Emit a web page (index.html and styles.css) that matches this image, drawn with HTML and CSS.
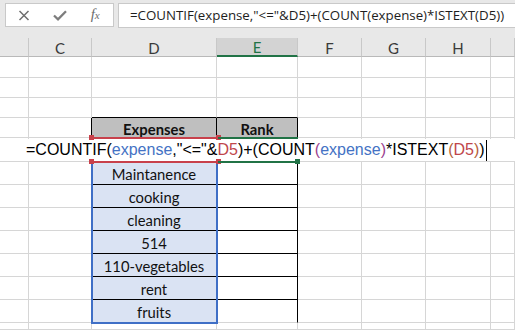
FILE: index.html
```html
<!DOCTYPE html>
<html>
<head>
<meta charset="utf-8">
<link rel="stylesheet" href="styles.css">
</head>
<body>
<div class="app">
  <div class="fbar">
    <div class="fbtns">
      <span class="btn"><svg width="12" height="11" viewBox="0 0 12 11"><path d="M1.5 1 L10.5 10 M10.5 1 L1.5 10" stroke="#6f6f6f" stroke-width="1.5" fill="none"/></svg></span>
      <span class="btn"><svg width="14" height="11" viewBox="0 0 14 11"><path d="M1 5.5 L5 9.3 L13 1.2" stroke="#7d7d7d" stroke-width="2.3" fill="none"/></svg></span>
      <span class="btn fx"><i>f</i><i class="x">x</i></span>
    </div>
    <div class="finput">=COUNTIF(expense,"&lt;="&amp;D5)+(COUNT(expense)*ISTEXT(D5))</div>
  </div>
  <div class="sheet">
    <div class="h"></div><div class="h">C</div><div class="h">D</div><div class="h sel">E</div><div class="h">F</div><div class="h">G</div><div class="h">H</div><div class="h"></div>

    <div class="c"></div><div class="c"></div><div class="c"></div><div class="c"></div><div class="c"></div><div class="c"></div><div class="c"></div><div class="c"></div>
    <div class="c"></div><div class="c"></div><div class="c"></div><div class="c"></div><div class="c"></div><div class="c"></div><div class="c"></div><div class="c"></div>
    <div class="c"></div><div class="c"></div><div class="c tb"></div><div class="c tb"></div><div class="c"></div><div class="c"></div><div class="c"></div><div class="c"></div>

    <div class="c"></div><div class="c tr"></div><div class="c th">Expenses</div><div class="c th">Rank</div><div class="c"></div><div class="c"></div><div class="c"></div><div class="c"></div>

    <div class="c"></div><div class="c"></div><div class="c"></div><div class="c"></div><div class="c"></div><div class="c"></div><div class="c"></div><div class="c"></div>

    <div class="c"></div><div class="c tr"></div><div class="c ex">Maintanence</div><div class="c rk"></div><div class="c"></div><div class="c"></div><div class="c"></div><div class="c"></div>
    <div class="c"></div><div class="c tr"></div><div class="c ex">cooking</div><div class="c rk"></div><div class="c"></div><div class="c"></div><div class="c"></div><div class="c"></div>
    <div class="c"></div><div class="c tr"></div><div class="c ex">cleaning</div><div class="c rk"></div><div class="c"></div><div class="c"></div><div class="c"></div><div class="c"></div>
    <div class="c"></div><div class="c tr"></div><div class="c ex">514</div><div class="c rk"></div><div class="c"></div><div class="c"></div><div class="c"></div><div class="c"></div>
    <div class="c"></div><div class="c tr"></div><div class="c ex">110-vegetables</div><div class="c rk"></div><div class="c"></div><div class="c"></div><div class="c"></div><div class="c"></div>
    <div class="c"></div><div class="c tr"></div><div class="c ex">rent</div><div class="c rk"></div><div class="c"></div><div class="c"></div><div class="c"></div><div class="c"></div>
    <div class="c"></div><div class="c tr"></div><div class="c ex">fruits</div><div class="c rk last"></div><div class="c"></div><div class="c"></div><div class="c"></div><div class="c"></div>

    <div class="c"></div><div class="c"></div><div class="c"></div><div class="c"></div><div class="c"></div><div class="c"></div><div class="c"></div><div class="c"></div>

    <div class="hl blue"></div>
    <div class="edit">=COUNTIF(<span class="rb">expense</span>,"&lt;="&amp;<span class="rr">D5</span>)+(COUNT<span class="p1">(</span><span class="rb">expense</span><span class="p1">)</span>*ISTEXT<span class="p2">(</span><span class="rr">D5</span><span class="p2">)</span>)<span class="caret"></span></div>
    <div class="hl red"><span class="sq tl"></span><span class="sq trr"></span><span class="sq bl"></span><span class="sq br"></span></div>
    <div class="hl green"><span class="sq gbr"></span></div>
  </div>
</div>
</body>
</html>
```
FILE: styles.css
```css
html, body {
  margin: 0;
  padding: 0;
  background: #ffffff;
}
.app {
  width: 515px;
  height: 330px;
  overflow: hidden;
  font-family: Lato, "Liberation Sans", sans-serif;
}
.fbar {
  height: 38px;
  box-sizing: border-box;
  padding: 3px 0 0 5px;
  background: #e8e8e8;
  display: flex;
  align-items: flex-start;
  gap: 4px;
}
.fbtns {
  width: 109px;
  height: 24px;
  box-sizing: border-box;
  border: 1px solid #c9c9c9;
  background: #ffffff;
  display: flex;
  align-items: center;
  padding-left: 0;
}
.btn {
  width: 36px;
  height: 22px;
  display: flex;
  align-items: center;
  justify-content: center;
}
.fx {
  font-family: "Liberation Serif", serif;
  font-size: 15px;
  color: #6c6c6c;
  padding-bottom: 1px;
}
.fx .x {
  font-size: 11px;
  margin-left: 0;
}
.finput {
  flex: 1;
  height: 25px;
  box-sizing: border-box;
  border: 1px solid #c9c9c9;
  border-right: none;
  background: #ffffff;
  font-family: "Open Sans", sans-serif;
  font-size: 13.3px;
  line-height: 22px;
  padding-left: 11px;
  color: #1e1e1e;
  white-space: nowrap;
}
.sheet {
  position: relative;
  display: grid;
  grid-template-columns: 29px 63px 125px 81px 64px 64px 65px 1fr;
  grid-template-rows: 19px 21px 20px 20px 20px 24px repeat(7, 23px) 1fr;
  height: 292px;
  background: #ffffff;
}
.h {
  background: #e8e8e8;
  border-right: 1px solid #c8c8c8;
  border-bottom: 1px solid #b9b9b9;
  font-size: 15px;
  color: #3a3a3a;
  display: flex;
  align-items: center;
  justify-content: center;
  padding-top: 1px;
}
.h.sel {
  background: #d3d3d3;
  color: #217346;
  border-bottom: 2px solid #217346;
}
.c {
  border-right: 1px solid #d6d6d6;
  border-bottom: 1px solid #d6d6d6;
  font-size: 14.8px;
  color: #111;
  display: flex;
  align-items: center;
  justify-content: center;
  padding-top: 2px;
  white-space: nowrap;
}
.c.tb { border-bottom-color: #000; }
.c.tr { border-right-color: #000; }
.c.th {
  background: #bfbfbf;
  font-weight: bold;
  border-right-color: #000;
  border-bottom-color: #000;
}
.c.ex {
  background: #dae3f3;
  border-right-color: #000;
  border-bottom-color: #000;
}
.c.rk {
  border-right-color: #000;
  border-bottom-color: #000;
}
.c.rk.last { border-bottom-color: #d6d6d6; }

.hl {
  position: absolute;
  box-sizing: border-box;
}
.blue {
  left: 91px;
  top: 123px;
  width: 127px;
  height: 163px;
  border: 2px solid #3f6fc6;
}
.red {
  left: 91px;
  top: 99px;
  width: 127px;
  height: 26px;
  border-top: 2px solid #c8414b;
  border-bottom: 2px solid #c8414b;
}
.green {
  left: 218px;
  top: 99px;
  width: 80px;
  height: 26px;
  border-top: 2px solid #217346;
  border-bottom: 2px solid #217346;
}
.sq {
  position: absolute;
  width: 5px;
  height: 5px;
  background: #c8414b;
}
.sq.tl { left: -2px; top: -4px; }
.sq.trr { right: -3px; top: -4px; }
.sq.bl { left: -2px; bottom: -3px; }
.sq.br { right: -3px; bottom: -3px; }
.sq.gbr { background: #217346; right: -2px; bottom: -3px; }

.edit {
  position: absolute;
  left: 0;
  right: 0;
  top: 101px;
  height: 22px;
  background: #ffffff;
  font-family: "Liberation Sans", Arial, sans-serif;
  font-size: 16px;
  line-height: 22px;
  padding-left: 26px;
  color: #000;
  white-space: nowrap;
  display: flex;
  align-items: center;
}
.rb { color: #4472c4; }
.rr { color: #c0454b; }
.p1 { color: #9b3f8f; }
.p2 { color: #b5603a; }
.caret {
  display: inline-block;
  width: 1px;
  height: 21px;
  background: #000;
  margin-left: 1px;
}
```
